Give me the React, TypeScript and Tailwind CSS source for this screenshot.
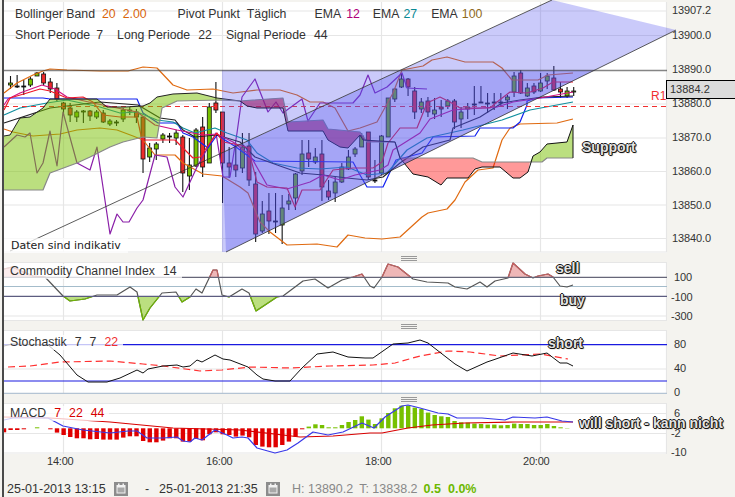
const grid = "#e6e6e6";

// candles: high, low, top of body, bottom of body, colour (g, r, or d for a doji)
const candles: [number, number, number, number, string][] = [
  [76, 89, 83, 85, "g"], [75, 88, 86, 87, "d"], [80, 95, 86, 87, "d"], [77, 87, 79, 85, "g"], [72, 76, 73, 76, "g"],
  [72, 85, 74, 83, "r"], [78, 93, 82, 89, "r"], [83, 101, 88, 99, "r"], [102, 115, 103, 109, "r"], [103, 122, 108, 115, "r"],
  [110, 122, 112, 117, "g"], [110, 123, 111, 112, "g"], [110, 121, 111, 116, "r"], [110, 119, 112, 117, "g"], [110, 123, 113, 122, "r"],
  [119, 126, 121, 124, "g"], [120, 126, 122, 123, "d"], [108, 122, 110, 119, "g"], [107, 115, 110, 111, "d"], [109, 123, 112, 117, "r"],
  [117, 173, 117, 159, "r"], [143, 162, 148, 157, "g"], [142, 160, 144, 149, "g"], [133, 143, 135, 139, "g"], [133, 143, 136, 137, "d"],
  [130, 145, 133, 138, "g"], [135, 192, 137, 173, "r"], [138, 190, 165, 176, "g"], [128, 167, 130, 166, "g"], [117, 177, 127, 167, "r"],
  [103, 163, 107, 163, "g"], [82, 113, 103, 110, "r"], [112, 203, 112, 163, "r"], [147, 178, 163, 167, "r"], [143, 177, 165, 170, "r"],
  [133, 173, 147, 168, "g"], [133, 186, 146, 180, "r"], [172, 242, 184, 234, "r"], [201, 233, 214, 231, "g"], [193, 234, 211, 221, "r"],
  [193, 233, 221, 222, "d"], [195, 244, 208, 225, "g"], [194, 210, 201, 204, "g"], [173, 210, 174, 198, "g"], [140, 175, 154, 171, "g"],
  [140, 167, 153, 159, "r"], [148, 164, 157, 162, "g"], [140, 201, 154, 187, "r"], [180, 200, 191, 197, "r"], [177, 202, 182, 193, "g"],
  [163, 183, 167, 182, "g"], [150, 170, 157, 169, "g"], [147, 157, 149, 154, "g"], [133, 147, 136, 147, "g"], [132, 180, 132, 177, "r"],
  [160, 183, 180, 181, "d"], [135, 175, 136, 173, "g"], [98, 137, 98, 137, "g"], [88, 102, 89, 99, "g"], [73, 88, 79, 87, "g"],
  [78, 96, 79, 87, "r"], [87, 119, 91, 112, "r"], [98, 113, 102, 109, "g"], [97, 117, 101, 112, "r"], [98, 119, 110, 114, "g"],
  [100, 117, 107, 109, "r"], [99, 109, 101, 106, "g"], [99, 129, 101, 122, "r"], [107, 128, 112, 119, "g"], [103, 119, 107, 109, "g"],
  [86, 115, 104, 105, "d"], [86, 103, 102, 103, "d"], [93, 113, 103, 104, "d"], [93, 110, 102, 103, "d"], [93, 107, 102, 103, "d"],
  [95, 109, 97, 100, "g"], [72, 97, 76, 92, "g"], [70, 94, 73, 93, "r"], [83, 97, 88, 96, "g"], [83, 94, 86, 92, "r"],
  [73, 92, 83, 91, "g"], [73, 89, 76, 81, "g"], [66, 91, 78, 90, "r"], [82, 98, 89, 92, "r"], [87, 98, 91, 96, "g"],
  [87, 96, 91, 92, "g"],
];

const bollUpper = "4,93 17,83 33,75 43,71 50,69 67,70 100,71 128,71 143,67 157,68 173,85 187,90 213,89 233,93 257,90 280,90 297,95 310,102 323,102 335,108 348,131 360,128 377,122 393,93 402,70 423,66 432,60 447,57 465,62 493,62 502,68 512,80 538,80 548,75 573,73";
const bollLower = "4,129 13,132 33,136 60,134 77,130 100,128 117,130 133,136 143,140 155,155 175,155 183,163 203,174 222,176 240,187 248,193 260,222 270,232 287,245 317,244 337,247 348,235 365,238 382,239 400,237 422,217 428,213 447,209 455,200 465,182 478,170 493,168 502,140 510,128 520,124 557,123 573,119";
const chikou = "4,147 17,135 25,137 30,133 37,173 43,163 50,131 57,166 63,112 77,163 90,170 97,147 110,234 117,214 123,222 129,222 137,208 143,200 155,155 167,157 175,187 183,197 197,167 216,133 223,177 230,177 237,133 242,97 255,79 268,112 276,102 283,113 287,110 302,99 308,121 320,103 353,103 360,95 368,75 375,93 387,87 402,73 407,88 427,89";
const blueStep = "4,98 43,98 50,99 137,99 143,113 158,123 177,123 183,133 193,137 208,148 217,135 236,147 255,161 353,162 360,175 367,187 383,187 390,172 396,160 422,153 433,137 475,136 480,128 513,128 520,122 527,105 527,101 537,98 573,97";
const redLine = "4,110 10,98 27,93 40,89 50,91 67,98 83,97 93,102 103,115 120,117 137,117 142,140 175,140 183,148 193,158 200,157 217,133 223,142 240,145 248,148 257,182 267,187 287,188 295,207 302,190 320,190 333,170 353,168 373,168 382,162 388,143 400,128 417,128 427,103 440,97 450,102 460,108 470,108 490,108 497,102 510,92 527,93 543,88 553,82 573,82";
const magentaLine = "4,105 8,99 20,93 42,85 55,89 67,97 93,103 137,112 155,125 177,130 203,135 217,134 233,142 250,155 267,185 287,189 310,182 323,175 340,180 355,175 380,170 388,165 393,150 420,133 430,119 453,110 497,107 513,102 540,98 573,92";
const tealLine = "4,115 20,108 47,103 67,100 100,107 120,113 137,112 157,120 173,122 183,128 195,133 215,128 227,133 247,140 257,153 273,163 297,168 320,169 347,167 367,175 387,173 407,150 427,138 463,130 502,120 530,110 573,102";
const blackLine = "4,123 50,108 100,102 138,105 160,118 175,120 183,130 195,137 217,135 240,142 255,157 280,166 300,173 323,175 347,178 367,180 383,177 400,163 423,147 450,140 453,128 480,117 502,103 520,100 543,97 573,96";

const cloudTop = "4,136 10,135 20,118 30,117 43,108 50,99 97,99 107,107 125,107 143,106 150,103 157,97 173,94 197,93 217,98 240,101";
const cloudBottom = "240,101 220,100 177,101 162,108 157,138 143,137 123,142 110,147 90,157 77,163 50,173 43,190 4,190";
const redCloud = "240,101 283,98 288,122 323,120 328,129 360,132 367,142 395,142 400,158 473,158 482,162 530,162 528,172 520,178 513,178 500,167 482,167 475,169 468,178 447,178 441,185 428,177 413,174 400,158 395,142 363,140 360,135 348,148 340,147 328,140 323,131 288,131 283,108 257,108 247,106";
const redCloudEdge = "240,101 247,106 257,108 283,108 288,131 323,131 328,140 340,147 348,148 360,135 363,140 395,142 400,158 413,174 428,177 441,185 447,178 468,178 475,169 482,167 500,167 513,178 520,178 528,172 533,156 540,152 547,144 567,142 573,125 573,158";
const greyEdge = "240,101 283,98 288,122 323,120 328,129 360,132 367,142 395,142 400,158 473,158 482,162 542,162 547,158 573,158";
const limeCloud = "530,162 533,156 540,152 547,144 567,142 573,125 573,158 547,158 542,162";

const cci = "4,269 12,267 33,276 45,277 63,296 70,301 85,299 97,295 117,295 130,287 137,292 143,320 150,308 162,293 176,292 182,302 190,297 196,289 202,293 213,270 217,270 222,295 229,297 242,289 249,293 256,311 268,303 277,297 283,296 303,281 315,279 328,288 342,280 353,277 362,274 370,286 374,288 382,277 388,264 398,267 413,279 427,282 448,283 455,287 467,289 480,282 487,287 495,281 508,278 513,263 525,274 533,278 538,276 548,274 553,277 560,286 567,287 573,285";
const stochK = "4,346 12,344 48,345 60,355 77,375 88,382 107,382 120,378 137,370 143,373 148,369 163,366 177,365 183,367 190,366 197,360 202,362 215,355 223,359 230,360 248,367 257,375 263,379 275,381 290,381 302,368 317,354 333,352 348,357 365,358 373,358 393,344 408,343 420,340 428,343 455,364 467,371 487,362 493,360 513,353 532,356 547,353 560,363 567,363 573,366";
const stochD = "8,367 30,366 60,362 110,361 143,364 163,366 200,371 222,370 250,367 290,368 330,366 373,365 395,363 420,356 448,351 470,352 500,356 540,354 568,359";
const macdBlue = "4,420 13,418 48,418 63,426 83,430 110,433 128,431 137,431 147,438 163,438 177,437 183,441 190,442 195,438 202,440 215,430 227,435 233,438 242,437 248,438 257,448 275,453 287,450 298,443 313,432 328,435 343,432 362,423 374,428 385,417 402,406 408,405 420,408 438,413 448,414 457,418 482,418 505,420 513,417 535,418 547,417 562,421 573,422";
const macdRed = "4,417 50,418 110,422 173,428 240,430 300,437 333,436 370,433 382,433 408,428 432,425 465,423 515,422 573,422";
const macdBars = [
  -4, -1.7, -1.7, -1, 0, 1, 0, -1, -4.3, -6.7, -8.7, -10, -10, -11, -10.7, -11.3, -11.3, -11.3, -9.3, -8, -8, -12.7, -14, -14, -12.3, -10, -10, -13.3, -13.3, -10.7, -12, -6, -4, -6, -6.7, -8.3, -7.3, -9, -16.7, -18.3, -19, -19, -16.7, -13.3, -8.3, -1,
  1.7, 4, 3.3, 1, 1, 3.3, 6.3, 8.3, 12, 8.7, 4.3, 10, 15.3, 20, 22.7, 22.7, 20.7, 19.3, 15.7, 13.3, 12, 11.3, 7.3, 6, 5.7, 4.7, 4.3, 3.7, 3.7, 3, 3.3, 4.7, 4.3, 4.3, 3.3, 3.3, 4.3, 2.3, 1, 0.3,
];

function VGrid({ y1, y2 }: { y1: number; y2: number }) {
  return (
    <g stroke={grid} strokeWidth={1.2}>
      {[63.5, 222.5, 381.5, 540.5, 666.5].map((x) => (
        <line key={x} x1={x} x2={x} y1={y1} y2={y2} />
      ))}
    </g>
  );
}

function Line({ points, color, width = 1.2, dash }: { points: string; color: string; width?: number; dash?: string }) {
  return <polyline points={points} fill="none" stroke={color} strokeWidth={width} strokeDasharray={dash} strokeLinejoin="round" />;
}

function HLine({ y, color = grid, width = 1.2, dash }: { y: number; color?: string; width?: number; dash?: string }) {
  return <line x1={4} x2={667} y1={y} y2={y} stroke={color} strokeWidth={width} strokeDasharray={dash} />;
}

// price axis labels sit at the y of the value they name
function Axis({ top, labels }: { top: number; labels: [string, number, number][] }) {
  return (
    <div className="relative w-[68px] shrink-0 text-[11px] text-[#333]">
      {labels.map(([text, y, x]) => (
        <span key={text} className="absolute leading-[14px] tracking-[-0.1px]" style={{ top: y - top - 7, left: x }}>
          {text}
        </span>
      ))}
    </div>
  );
}

function Handle() {
  return (
    <div className="flex h-[9px] w-full items-end justify-center">
      <div className="ml-[79px] flex w-[16px] flex-col gap-px pb-px">
        <div className="h-px bg-[#999]" />
        <div className="h-px bg-[#999]" />
        <div className="h-px bg-[#999]" />
      </div>
    </div>
  );
}

function Callout({ text, cls }: { text: string; cls: string }) {
  return (
    <span
      className={`absolute z-20 whitespace-nowrap text-[14px] font-bold leading-none text-[#e4e4e4] [text-shadow:1px_0_0_#111,-1px_0_0_#111,0_1px_0_#111,0_-1px_0_#111,1px_1px_1px_#333] ${cls}`}
    >
      {text}
    </span>
  );
}

function PriceChart() {
  return (
    <svg viewBox="4 2 663 251" className="relative z-10 block h-[251px] w-[663px] shrink-0 overflow-visible bg-white">
      <VGrid y1={2} y2={252} />
      {[11, 35.5, 104, 138, 171.5, 205, 238.5, 252].map((y) => (
        <HLine key={y} y={y} />
      ))}
      {candles.map(([hi, lo, top, bot, kind], i) => {
        const x = 10.5 + 6.626 * i;
        const fill = kind === "g" ? "#77c000" : kind === "r" ? "#ee2a2a" : "#111";
        return (
          <g key={i}>
            <line x1={x} x2={x} y1={hi} y2={lo} stroke="#111" strokeWidth={1.1} />
            <rect x={x - 2} y={top} width={4} height={bot - top} fill={fill} stroke="#111" strokeWidth={0.8} />
          </g>
        );
      })}
      <Line points={bollUpper} color="#e06a10" />
      <Line points={bollLower} color="#e06a10" />
      <Line points={chikou} color="#8a1fa8" />
      <Line points={blueStep} color="#1020f0" />
      <Line points={tealLine} color="#108f9f" />
      <Line points={blackLine} color="#222" />
      <Line points={magentaLine} color="#d01080" />
      <Line points={redLine} color="#f01828" />
      <HLine y={106.5} color="#f03030" width={1} dash="5 4" />
      <polygon points={`${cloudTop} ${cloudBottom}`} fill="#77c000" fillOpacity={0.5} />
      <polygon points={redCloud} fill="#ff0000" fillOpacity={0.4} />
      <polygon points={limeCloud} fill="#77c000" fillOpacity={0.5} />
      <polygon points="240,101 283,98 288,122 323,120 328,129 360,132 367,142 395,142 400,158 395,142 363,140 360,135 348,148 340,147 328,140 323,131 288,131 283,108 257,108 247,106" fill="#801060" fillOpacity={0.35} />
      <Line points={cloudTop} color="#222" width={1} />
      <Line points={cloudBottom} color="#888" width={1.2} />
      <Line points={greyEdge} color="#888" width={1.2} />
      <Line points={redCloudEdge} color="#111" width={1} />
      <polygon points="222,70 595,70 226,252 222,252" fill="#5050f0" fillOpacity={0.3} />
      <polygon points="222,153 552,0 676,30 226,252" fill="#5050f0" fillOpacity={0.3} />
      <line x1={4} x2={667} y1={70.5} y2={70.5} stroke="#444" strokeOpacity={0.65} strokeWidth={1.5} />
      <line x1={10} y1={251} x2={552} y2={0} stroke="#333" strokeOpacity={0.8} strokeWidth={1} />
      <line x1={226} y1={252} x2={676} y2={30} stroke="#333" strokeOpacity={0.8} strokeWidth={1} />
    </svg>
  );
}

function CciChart() {
  return (
    <svg viewBox="4 262 663 59" className="block h-[59px] w-[663px] shrink-0 bg-white">
      <defs>
        <clipPath id="over">
          <rect x={0} y={255} width={670} height={22.3} />
        </clipPath>
        <clipPath id="under">
          <rect x={0} y={296.3} width={670} height={30} />
        </clipPath>
      </defs>
      <VGrid y1={262} y2={321} />
      <HLine y={262.5} />
      <HLine y={316} />
      <HLine y={320.5} />
      <HLine y={286.5} color="#a4bccb" />
      <polygon points={`4,277.3 ${cci} 573,277.3`} fill="#d84a4a" fillOpacity={0.4} clipPath="url(#over)" />
      <polygon points={`4,296.3 ${cci} 573,296.3`} fill="#77c000" fillOpacity={0.5} clipPath="url(#under)" />
      <Line points={cci} color="#555" />
      <g clipPath="url(#over)">
        <Line points={cci} color="#c86060" />
      </g>
      <g clipPath="url(#under)">
        <Line points={cci} color="#70b800" />
      </g>
      <HLine y={277.3} color="#666678" />
      <HLine y={296.3} color="#5c5c80" />
    </svg>
  );
}

function StochChart() {
  return (
    <svg viewBox="4 330 663 64" className="block h-[64px] w-[663px] shrink-0 bg-white">
      <VGrid y1={330} y2={394} />
      <HLine y={330.5} />
      <HLine y={369} />
      <HLine y={344.7} color="#1a1ae0" />
      <HLine y={381} color="#1a1ae0" />
      <HLine y={393.5} color="#b4c4d4" width={1.5} />
      <Line points={stochD} color="#ff3030" dash="7 4" />
      <Line points={stochK} color="#111" width={1} />
    </svg>
  );
}

function MacdChart() {
  return (
    <svg viewBox="4 403 663 51" className="block h-[51px] w-[663px] shrink-0 bg-white">
      <VGrid y1={403} y2={454} />
      <HLine y={403.5} />
      <HLine y={413.5} />
      <HLine y={433.5} />
      <HLine y={453} />
      {macdBars.map((v, i) => {
        const x = 4 + 6.626 * i;
        if (v === 0) return null;
        return <rect key={i} x={x - 2.2} y={v > 0 ? 428.3 - v : 428.3} width={4.4} height={Math.abs(v)} fill={v > 0 ? "#77c000" : "#e00000"} />;
      })}
      <Line points={macdRed} color="#d80000" />
      <Line points={macdBlue} color="#3838e8" />
    </svg>
  );
}

function CalendarIcon({ cls }: { cls: string }) {
  return (
    <svg viewBox="0 0 14 14" className={`h-[14px] w-[14px] shrink-0 ${cls}`}>
      <rect width={14} height={14} fill="#8c8c8c" />
      <rect x={2.5} y={3} width={9} height={8.5} fill="#f2f2f2" />
      <rect x={4} y={1.5} width={1.5} height={2.5} fill="#f2f2f2" />
      <rect x={8.5} y={1.5} width={1.5} height={2.5} fill="#f2f2f2" />
      <rect x={3.5} y={5.5} width={7} height={5} fill="#a8a8a8" />
    </svg>
  );
}

export default function App() {
  return (
    <div className="relative h-[497px] w-[735px] overflow-hidden bg-[#f4f3ef] pl-[2px] font-['Liberation_Sans',Arial,sans-serif] text-[#333]">
      <div className="h-full border-l-2 border-[#4a4a4a] pt-[2px]">
        <div className="relative flex">
          <PriceChart />
          <Axis
            top={2}
            labels={[
              ["13907.2", 10, 5],
              ["13900.0", 35, 5],
              ["13890.0", 69, 5],
              ["13880.0", 103, 5],
              ["13870.0", 137, 5],
              ["13860.0", 171, 5],
              ["13850.0", 205, 5],
              ["13840.0", 238, 5],
            ]}
          />
          <div className="absolute left-[11px] top-[5px] z-20 flex flex-col gap-[7px] text-[12.3px] leading-[14px]">
            <div className="flex">
              <span>Bollinger Band</span>
              <span className="ml-[7px] text-[#d9650a]">20</span>
              <span className="ml-[7px] text-[#d9650a]">2.00</span>
              <span className="ml-[31px]">Pivot Punkt</span>
              <span className="ml-[7px]">Täglich</span>
              <span className="ml-[28px]">EMA</span>
              <span className="ml-[5px] text-[#b0007a]">12</span>
              <span className="ml-[13px]">EMA</span>
              <span className="ml-[4px] text-[#0a8a94]">27</span>
              <span className="ml-[14px]">EMA</span>
              <span className="ml-[4px] text-[#8f6a1c]">100</span>
            </div>
            <div className="flex">
              <span>Short Periode</span>
              <span className="ml-[6px]">7</span>
              <span className="ml-[14px]">Long Periode</span>
              <span className="ml-2">22</span>
              <span className="ml-[14px]">Signal Periode</span>
              <span className="ml-2">44</span>
            </div>
          </div>
          <span className="absolute left-0 top-[236px] z-20 bg-white/70 px-[7px] font-['DejaVu_Sans',sans-serif] text-[11px] leading-[15px] text-[#222]">
            Daten sind indikativ
          </span>
          <span className="absolute left-[647px] top-[87px] z-20 text-[12px] leading-[14px] text-[#f03030]">R1</span>
          <div className="absolute left-[662px] top-[78px] z-20 flex h-[19px] w-[70px] items-center border border-black bg-[#dcdcdc] pl-[3px] text-[11px] text-[#333]">
            13884.2
          </div>
          <Callout text="Support" cls="left-[578px] top-[138px]" />
        </div>

        <Handle />
        <div className="relative flex">
          <CciChart />
          <Axis
            top={262}
            labels={[
              ["100", 277, 7],
              ["-100", 297, 4],
              ["-300", 316, 4],
            ]}
          />
          <span className="absolute left-0 top-[2px] bg-white/75 pl-[6px] pr-[5px] text-[12.3px] leading-[15px]">
            Commodity Channel Index<span className="ml-2">14</span>
          </span>
          <Callout text="sell" cls="left-[552px] top-[-1px]" />
          <Callout text="buy" cls="left-[556px] top-[31px]" />
        </div>

        <Handle />
        <div className="relative flex">
          <StochChart />
          <Axis
            top={330}
            labels={[
              ["80", 344, 7],
              ["40", 368, 7],
              ["0", 392, 7],
            ]}
          />
          <span className="absolute left-0 top-[5px] bg-white/75 pl-[6px] pr-[5px] text-[12.3px] leading-[15px]">
            Stochastik<span className="ml-2">7</span>
            <span className="ml-2">7</span>
            <span className="ml-2 text-[#f03030]">22</span>
          </span>
          <Callout text="short" cls="left-[544px] top-[6px]" />
        </div>

        <Handle />
        <div className="relative flex">
          <MacdChart />
          <Axis
            top={403}
            labels={[
              ["6", 413, 7],
              ["-2", 433, 4],
              ["-10", 452, 4],
            ]}
          />
          <span className="absolute left-0 top-[3px] bg-white/75 pl-[6px] pr-[5px] text-[12.3px] leading-[15px]">
            MACD<span className="ml-2 text-[#d80000]">7</span>
            <span className="ml-2 text-[#d80000]">22</span>
            <span className="ml-2 text-[#d80000]">44</span>
          </span>
          <Callout text="will short - kann nicht" cls="left-[575px] top-[13px]" />
        </div>

        <div className="flex h-[15px] items-center text-[11px] tracking-[-0.2px] text-[#333]">
          <span className="ml-[43px] w-[26px]">14:00</span>
          <span className="ml-[133px] w-[26px]">16:00</span>
          <span className="ml-[133px] w-[26px]">18:00</span>
          <span className="ml-[132px] w-[26px]">20:00</span>
        </div>

        <div className="mt-[12px] flex h-[16px] items-center text-[12.5px] text-[#333]">
          <span className="ml-[3px] w-[98px] whitespace-nowrap">25-01-2013 13:15</span>
          <CalendarIcon cls="ml-[9px]" />
          <span className="ml-[17px] w-[14px]">-</span>
          <span className="w-[98px] whitespace-nowrap">25-01-2013 21:35</span>
          <CalendarIcon cls="ml-[9px]" />
          <span className="ml-[12px] whitespace-nowrap text-[#888]">H: 13890.2</span>
          <span className="ml-[6px] whitespace-nowrap text-[#888]">T: 13838.2</span>
          <span className="ml-[6px] font-bold text-[#6cb800]">0.5</span>
          <span className="ml-[7px] font-bold text-[#6cb800]">0.0%</span>
        </div>
      </div>
    </div>
  );
}
